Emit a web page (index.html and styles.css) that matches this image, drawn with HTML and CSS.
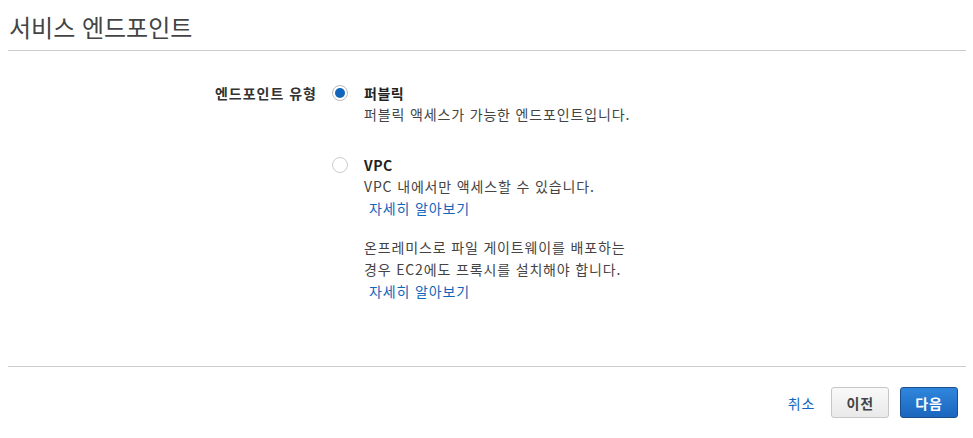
FILE: index.html
```html
<!DOCTYPE html>
<html lang="ko">
<head>
<meta charset="utf-8">
<link rel="stylesheet" href="styles.css">
</head>
<body>
<div class="page">
  <h1 class="title">서비스 엔드포인트</h1>
  <div class="form">
    <div class="label">엔드포인트 유형</div>
    <div class="options">
      <div class="option">
        <span class="radio checked"></span>
        <div class="opt-body">
          <div class="opt-title">퍼블릭</div>
          <div class="opt-desc">퍼블릭 액세스가 가능한 엔드포인트입니다.</div>
        </div>
      </div>
      <div class="option">
        <span class="radio"></span>
        <div class="opt-body">
          <div class="opt-title">VPC</div>
          <div class="opt-desc">VPC 내에서만 액세스할 수 있습니다.</div>
          <a class="link">자세히 알아보기</a>
          <div class="opt-desc note">온프레미스로 파일 게이트웨이를 배포하는<br>경우 EC2에도 프록시를 설치해야 합니다.</div>
          <a class="link">자세히 알아보기</a>
        </div>
      </div>
    </div>
  </div>
  <div class="footer">
    <a class="link cancel">취소</a>
    <button class="btn btn-secondary">이전</button>
    <button class="btn btn-primary">다음</button>
  </div>
</div>
</body>
</html>
```
FILE: styles.css
```css
* { box-sizing: border-box; }
html, body { margin: 0; padding: 0; background: #fff; }
body {
  font-family: "Noto Sans CJK KR", "Noto Sans", sans-serif;
  font-size: 14px;
  color: #444;
}
.page { padding: 0 7px 0 8px; }
.title {
  margin: 0;
  padding: 12px 0 8px 1px;
  font-size: 24px;
  font-weight: 400;
  line-height: 30px;
  color: #444;
  border-bottom: 1px solid #ccc;
}
.form {
  display: flex;
  padding-top: 32px;
  min-height: 316px;
  border-bottom: 1px solid #ccc;
}
.label {
  width: 309px;
  text-align: right;
  font-weight: 700;
  line-height: 21px;
  letter-spacing: 1px;
  margin-right: -1px;
  color: #333;
}
.options {
  margin-left: 16px;
  display: flex;
  flex-direction: column;
  gap: 30px;
}
.option { display: flex; }
.radio {
  width: 16px;
  height: 16px;
  border: 1px solid #bbb;
  border-radius: 50%;
  margin-top: 2px;
  margin-right: 16px;
  flex: none;
  display: flex;
  align-items: center;
  justify-content: center;
  background: #fff;
}
.radio.checked::after {
  content: "";
  width: 10px;
  height: 10px;
  border-radius: 50%;
  background: #1166bb;
}
.option:nth-child(2) .radio { border-color: #ccc; }
.opt-body {
  display: flex;
  flex-direction: column;
  align-items: flex-start;
  line-height: 21px;
  letter-spacing: 0.85px;
}
.opt-title { font-weight: 700; color: #222; letter-spacing: 0.5px; }
.opt-desc { color: #444; }
.link {
  color: #1166bb;
  text-decoration: none;
  cursor: pointer;
}
.opt-body .link { padding-left: 5px; line-height: 21px; margin-top: 1px; }
.note { margin-top: 17px; line-height: 22px; }
.footer {
  display: flex;
  justify-content: flex-end;
  align-items: center;
  padding: 20px 8px 0 0;
}
.cancel { margin-right: 16px; letter-spacing: 1px; }
.btn {
  font-family: "Noto Sans CJK KR", "Noto Sans", sans-serif;
  font-size: 14px;
  font-weight: 700;
  height: 31px;
  padding: 0 14px;
  letter-spacing: 1px;
  border-radius: 3px;
  cursor: pointer;
}
.btn-secondary {
  color: #444;
  background: linear-gradient(#f9f9f9, #e9e9e9);
  border: 1px solid #c6c6c6;
  margin-right: 11px;
}
.btn-primary {
  color: #fff;
  background: linear-gradient(#2f86dc, #1b66bf);
  border: 1px solid #1a4f8c;
}
```
